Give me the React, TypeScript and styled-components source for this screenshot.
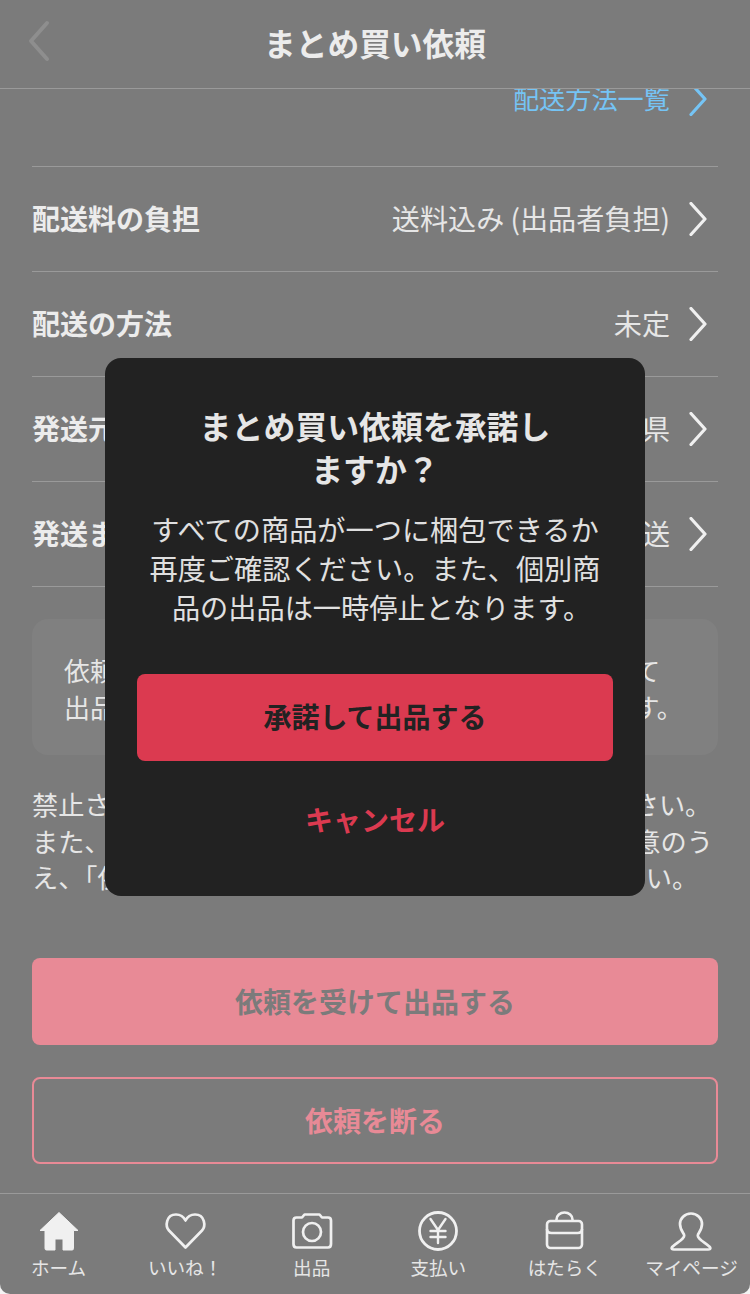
import React from "react";
import styled, { createGlobalStyle } from "styled-components";

const Global = createGlobalStyle`
  html, body { margin: 0; padding: 0; background: #f4f4f4; }
  body { font-family: "Noto Sans CJK JP", "Noto Sans", sans-serif; }
  * { box-sizing: border-box; }
`;

const Page = styled.div`
  position: relative;
  width: 750px;
  height: 1294px;
  background: #7b7b7b;
  border-radius: 0 0 10px 10px;
  overflow: hidden;
  display: flex;
  flex-direction: column;
  color: #ececec;
`;

const Header = styled.header`
  position: relative;
  z-index: 1;
  flex: none;
  height: 89px;
  padding-bottom: 5px;
  background: #7b7b7b;
  border-bottom: 1px solid #9a9a9a;
  display: flex;
  align-items: center;
  justify-content: center;
`;

const BackIcon = styled.svg`
  position: absolute;
  left: 25px;
  top: 18px;
`;

const Title = styled.h1`
  margin: 0;
  font-size: 31.7px;
  font-weight: 700;
  line-height: 44px;
  color: #ececec;
`;

const Content = styled.main`
  flex: 1;
  min-height: 0;
  padding: 0 32px;
  overflow: hidden;
`;

const LinkRow = styled.div`
  display: flex;
  justify-content: flex-end;
  align-items: center;
  gap: 19px;
  height: 36px;
  margin-top: -8px;
  margin-bottom: 49px;
  padding-right: 11px;
  color: #75c4f5;
`;

const LinkText = styled.span`
  font-size: 26.2px;
  line-height: 36px;
  padding-bottom: 2px;
`;

const Row = styled.div`
  display: flex;
  align-items: center;
  height: 105px;
  border-top: 1px solid #9a9a9a;
  padding-right: 11px;
  gap: 19px;
`;

const RowLast = styled.div`
  border-top: 1px solid #9a9a9a;
  height: 1px;
`;

const RowLabel = styled.span`
  flex: 1;
  padding-bottom: 3px;
  font-size: 28px;
  font-weight: 700;
  color: #ececec;
`;

const RowValue = styled.span`
  padding-bottom: 3px;
  font-size: 28.1px;
  color: #e6e6e6;
`;

const InfoBox = styled.div`
  margin-top: 32px;
  height: 136px;
  padding: 33px 32px 0;
  border-radius: 16px;
  background: #808080;
  font-size: 26px;
  line-height: 36.5px;
  color: #e6e6e6;
`;

const Note = styled.p`
  margin: 31px 0 0;
  font-size: 26.2px;
  line-height: 36.5px;
  white-space: nowrap;
  color: #e6e6e6;
`;

const PrimaryButton = styled.div`
  margin-top: 62px;
  height: 87px;
  border-radius: 8px;
  background: #e88a96;
  color: #7b7b7b;
  font-size: 28px;
  font-weight: 700;
  display: flex;
  align-items: center;
  justify-content: center;
`;

const OutlineButton = styled.div`
  margin-top: 32px;
  height: 87px;
  border-radius: 8px;
  border: 2px solid #e88a96;
  color: #e88a96;
  font-size: 28px;
  font-weight: 700;
  display: flex;
  align-items: center;
  justify-content: center;
`;

const TabBar = styled.nav`
  flex: none;
  height: 101px;
  border-top: 1px solid #9a9a9a;
  display: flex;
  justify-content: space-between;
  padding-top: 16px;
`;

const Tab = styled.div`
  width: 117px;
  display: flex;
  flex-direction: column;
  align-items: center;
`;

const TabIcon = styled.svg`
  display: block;
  width: 44px;
  height: 44px;
  color: #f0f0f0;
`;

const TabLabel = styled.span`
  font-size: 18.6px;
  line-height: 26px;
  white-space: nowrap;
  color: #e6e6e6;
`;

const Modal = styled.div`
  position: absolute;
  z-index: 2;
  left: 105px;
  top: 358px;
  width: 540px;
  height: 538px;
  padding: 46px 32px 0;
  border-radius: 16px;
  background: #222222;
  display: flex;
  flex-direction: column;
  align-items: center;
`;

const ModalTitle = styled.h2`
  margin: 0;
  width: 360px;
  text-align: center;
  font-size: 31.9px;
  font-weight: 700;
  line-height: 43px;
  color: #e6e6e6;
`;

const ModalBody = styled.p`
  margin: 19px 0 0;
  width: 470px;
  text-align: center;
  font-size: 28.2px;
  line-height: 39px;
  color: #e0e0e0;
`;

const ModalBodyEnd = styled.span`
  display: block;
  padding-left: 13px;
`;

const ConfirmButton = styled.div`
  margin-top: 48px;
  width: 476px;
  height: 87px;
  flex: none;
  padding-bottom: 3px;
  border-radius: 8px;
  background: #db3a50;
  color: #222222;
  font-size: 28px;
  font-weight: 700;
  display: flex;
  align-items: center;
  justify-content: center;
`;

const CancelButton = styled.div`
  margin-top: 31px;
  height: 54px;
  flex: none;
  color: #db3a50;
  font-size: 28px;
  font-weight: 700;
  display: flex;
  align-items: center;
  justify-content: center;
`;

const Chevron = ({ color = "#f0f0f0" }: { color?: string }) => (
  <svg width="18" height="34" viewBox="0 0 18 34" fill="none" style={{ flex: "none" }}>
    <path d="M2 1.500L16 17L2 32.500" stroke={color} strokeWidth="3.2" strokeLinecap="round" strokeLinejoin="round" />
  </svg>
);

const rows = [
  ["配送料の負担", "送料込み (出品者負担)"],
  ["配送の方法", "未定"],
  ["発送元の地域", "神奈川県"],
  ["発送までの日数", "2〜3日で発送"],
];

export default function App() {
  return (
    <Page>
      <Global />
      <Header>
        <BackIcon width="28" height="46" viewBox="0 0 28 46" fill="none">
          <path d="M22 5L6 23L22 41" stroke="#8e8e8e" strokeWidth="4" strokeLinecap="round" strokeLinejoin="round" />
        </BackIcon>
        <Title>まとめ買い依頼</Title>
      </Header>
      <Content>
        <LinkRow>
          <LinkText>配送方法一覧</LinkText>
          <Chevron color="#75c4f5" />
        </LinkRow>
        {rows.map(([label, value]) => (
          <Row key={label}>
            <RowLabel>{label}</RowLabel>
            <RowValue>{value}</RowValue>
            <Chevron />
          </Row>
        ))}
        <RowLast />
        <InfoBox>
          依頼を受けると、まとめ買い専用の商品を作成して
          <br />
          出品します。依頼者へ購入のご案内が通知されます。
        </InfoBox>
        <Note>
          禁止されている商品が含まれていないかご確認ください。
          <br />
          また、出品禁止事項や利用規約をご確認いただき同意のう
          <br />
          え、「依頼を受けて出品する」ボタンを押してください。
        </Note>
        <PrimaryButton>依頼を受けて出品する</PrimaryButton>
        <OutlineButton>依頼を断る</OutlineButton>
      </Content>
      <TabBar>
        <Tab>
          <TabIcon viewBox="0 0 44 44" fill="currentColor">
            <path
              d="M22 2.500L41 20.500H36.500V38.500Q36.500 40 35 40H26V29H18V40H9.500Q8 40 8 38.500V20.500H3Z"
              stroke="currentColor"
              strokeWidth="1"
              strokeLinejoin="round"
            />
          </TabIcon>
          <TabLabel>ホーム</TabLabel>
        </Tab>
        <Tab>
          <TabIcon viewBox="0 0 44 44" fill="none" stroke="currentColor" strokeWidth="2.7" strokeLinejoin="round">
            <path d="M22.500 37.500L6 20.500C2 16 3 4.500 13 4.500C17.500 4.500 21 7.500 22.500 10.500C24 7.500 27.500 4.500 32 4.500C42 4.500 43 16 39 20.500Z" />
          </TabIcon>
          <TabLabel>いいね！</TabLabel>
        </Tab>
        <Tab>
          <TabIcon viewBox="0 0 44 44" fill="none" stroke="currentColor" strokeWidth="2.7" strokeLinejoin="round">
            <path d="M6.500 7.500H12L14.500 4.500H29.500L32 7.500H38Q41 7.500 41 10.500V34Q41 37.500 38 37.500H6.500Q3.500 37.500 3.500 34V10.500Q3.500 7.500 6.500 7.500Z" />
            <circle cx="22" cy="22" r="9" />
          </TabIcon>
          <TabLabel>出品</TabLabel>
        </Tab>
        <Tab>
          <TabIcon viewBox="0 0 44 44" fill="none" stroke="currentColor" strokeWidth="2.8" strokeLinecap="round" strokeLinejoin="round">
            <circle cx="22" cy="21" r="18.500" />
            <path d="M14.500 9L22 20L29.500 9M22 20V33M14.500 21H29.500M14.500 27H29.500" strokeWidth="2.4" />
          </TabIcon>
          <TabLabel>支払い</TabLabel>
        </Tab>
        <Tab>
          <TabIcon viewBox="0 0 44 44" fill="none" stroke="currentColor" strokeWidth="2.6" strokeLinejoin="round">
            <rect x="4" y="11" width="35" height="27" rx="3.500" />
            <path d="M13.500 11V9.500A7.500 6.500 0 0 1 29.500 9.500V11" />
            <path d="M4 19Q4 23 8.500 23H34.500Q39 23 39 19" />
          </TabIcon>
          <TabLabel>はたらく</TabLabel>
        </Tab>
        <Tab>
          <TabIcon viewBox="0 0 44 44" fill="none" stroke="currentColor" strokeWidth="2.7" strokeLinejoin="round">
            <path d="M22 3.500C15.500 3.500 11 8.500 11 14C11 19 13.500 22 15 24.500C16 26.500 14.500 28 11.500 30.500C7.500 33.500 3.500 36 2.800 37.500C2.300 39 3 39.500 5 39.500H39C41 39.500 41.700 39 41.200 37.500C40.500 36 36.500 33.500 32.500 30.500C29.500 28 28 26.500 29 24.500C30.500 22 33 19 33 14C33 8.500 28.500 3.500 22 3.500Z" />
          </TabIcon>
          <TabLabel>マイページ</TabLabel>
        </Tab>
      </TabBar>
      <Modal>
        <ModalTitle>まとめ買い依頼を承諾しますか？</ModalTitle>
        <ModalBody>
          すべての商品が一つに梱包できるか再度ご確認ください。また、個別商
          <ModalBodyEnd>品の出品は一時停止となります。</ModalBodyEnd>
        </ModalBody>
        <ConfirmButton>承諾して出品する</ConfirmButton>
        <CancelButton>キャンセル</CancelButton>
      </Modal>
    </Page>
  );
}
